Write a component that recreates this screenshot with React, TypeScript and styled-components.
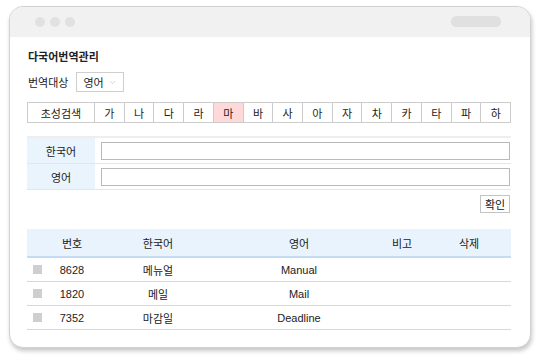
import React from "react";
import styled, { createGlobalStyle } from "styled-components";
import { ChevronDown } from "lucide-react";

const GlobalStyle = createGlobalStyle`
  body {
    margin: 0;
    background: #ffffff;
    font-family: "Liberation Sans", "Noto Sans CJK KR", sans-serif;
    font-size: 11px;
    color: #222;
  }
`;

type Row = { no: string; ko: string; en: string };

const rows: Row[] = [
  { no: "8628", ko: "메뉴얼", en: "Manual" },
  { no: "1820", ko: "메일", en: "Mail" },
  { no: "7352", ko: "마감일", en: "Deadline" },
];

const letters = ["가", "나", "다", "라", "마", "바", "사", "아", "자", "차", "카", "타", "파", "하"];

const Page = styled.div`
  width: 541px;
  height: 361px;
  box-sizing: border-box;
  padding: 6px 10px 13px 9px;
`;

const Window = styled.div`
  height: 100%;
  box-sizing: border-box;
  border: 1px solid #d2d2d2;
  border-radius: 14px;
  background: #fff;
  box-shadow: 1px 3px 4px rgba(0, 0, 0, 0.22);
  overflow: hidden;
  display: flex;
  flex-direction: column;
`;

const TitleBar = styled.div`
  height: 30px;
  background: #f1f1f1;
  display: flex;
  align-items: center;
  padding: 0 29px 0 25px;
  gap: 5px;
`;

const Dot = styled.span`
  width: 10px;
  height: 10px;
  border-radius: 50%;
  background: #e1e1e1;
`;

const Pill = styled.span`
  margin-left: auto;
  width: 50px;
  height: 11px;
  border-radius: 6px;
  background: #e0e0e0;
  margin-top: -2px;
`;

const Content = styled.div`
  padding: 0 19px 0 17px;
  display: flex;
  flex-direction: column;
`;

const Heading = styled.h1`
  margin: 11px 0 0 1px;
  font-family: "Noto Sans CJK KR", sans-serif;
  font-size: 11px;
  line-height: 16px;
  font-weight: 700;
  color: #222;
`;

const TargetRow = styled.div`
  margin-top: 8px;
  display: flex;
  align-items: center;
  gap: 8px;
  height: 20px;
`;

const Label = styled.span`
  font-family: "Noto Sans CJK KR", sans-serif;
  font-size: 11px;
  margin-left: 1px;
  white-space: nowrap;
`;

const SelectBox = styled.div`
  width: 48px;
  height: 20px;
  flex: 0 0 auto;
  box-sizing: border-box;
  border: 1px solid #cfcfcf;
  display: flex;
  align-items: center;
  padding: 0 3px 0 6px;
  gap: 4px;
  white-space: nowrap;
  font-family: "Noto Sans CJK KR", sans-serif;
  font-size: 11px;
  color: #222;
  svg {
    flex: 0 0 auto;
  }
`;

const ChosungBar = styled.div`
  margin-top: 10px;
  display: flex;
  height: 21px;
  box-sizing: border-box;
  border: 1px solid #cccccc;
`;

const ChosungCell = styled.div<{ $wide?: boolean; $active?: boolean }>`
  flex: ${(p) => (p.$wide ? "0 0 66px" : "1 1 0")};
  display: flex;
  align-items: center;
  justify-content: center;
  font-family: "Noto Sans CJK KR", sans-serif;
  font-size: 11px;
  color: #222;
  background: ${(p) => (p.$active ? "#ffd9d9" : "#fff")};
  & + & {
    border-left: 1px solid #cccccc;
  }
`;

const FormTable = styled.div`
  margin-top: 13px;
  border-top: 2px solid #eeeeee;
`;

const FormRow = styled.div`
  display: flex;
  height: 25px;
  border-bottom: 1px solid #e6e6e6;
`;

const FormLabel = styled.div`
  width: 68px;
  background: #eaf4fd;
  display: flex;
  align-items: center;
  justify-content: center;
  font-family: "Noto Sans CJK KR", sans-serif;
  font-size: 11px;
  color: #222;
`;

const FormField = styled.div`
  flex: 1;
  display: flex;
  align-items: center;
  padding: 0 1px 0 6px;
`;

const TextInput = styled.input`
  width: 100%;
  height: 18px;
  box-sizing: border-box;
  border: 1px solid #b9b9b9;
  padding: 0 4px;
  outline: none;
  background: #fff;
`;

const Actions = styled.div`
  margin-top: 5px;
  display: flex;
  justify-content: flex-end;
  padding-right: 1px;
`;

const Button = styled.button`
  width: 30px;
  height: 18px;
  box-sizing: border-box;
  border: 1px solid #c4c4c4;
  background: #fff;
  padding: 0;
  font-family: "Noto Sans CJK KR", sans-serif;
  font-size: 11px;
  font-weight: 400;
  color: #111;
`;

const Grid = styled.div`
  margin-top: 16px;
`;

const cols = "22px 46px 126px 156px 50px 1fr";

const GridHead = styled.div`
  display: grid;
  grid-template-columns: ${cols};
  height: 27px;
  background: #e8f3fd;
  border-bottom: 2px solid #c3dcf2;
  align-items: center;
`;

const GridRow = styled.div`
  display: grid;
  grid-template-columns: ${cols};
  height: 23px;
  border-bottom: 1px solid #c6dcf0;
  align-items: center;
`;

const Cell = styled.div<{ $kr?: boolean }>`
  text-align: center;
  font-family: ${(p) => (p.$kr ? '"Noto Sans CJK KR", sans-serif' : '"Liberation Sans", "Noto Sans CJK KR", sans-serif')};
  font-size: 11px;
  color: #222;
`;

const Check = styled.span`
  display: block;
  width: 9px;
  height: 9px;
  background: #cfcfcf;
  margin-left: 6px;
`;

export default function App() {
  return (
    <Page>
      <GlobalStyle />
      <Window>
        <TitleBar>
          <Dot />
          <Dot />
          <Dot />
          <Pill />
        </TitleBar>
        <Content>
          <Heading>다국어번역관리</Heading>
          <TargetRow>
            <Label>번역대상</Label>
            <SelectBox>
              <span>영어</span>
              <ChevronDown size={9} color="#b5b5b5" strokeWidth={1.5} />
            </SelectBox>
          </TargetRow>
          <ChosungBar>
            <ChosungCell $wide>초성검색</ChosungCell>
            {letters.map((l) => (
              <ChosungCell key={l} $active={l === "마"}>
                {l}
              </ChosungCell>
            ))}
          </ChosungBar>
          <FormTable>
            <FormRow>
              <FormLabel>한국어</FormLabel>
              <FormField>
                <TextInput type="text" />
              </FormField>
            </FormRow>
            <FormRow>
              <FormLabel>영어</FormLabel>
              <FormField>
                <TextInput type="text" />
              </FormField>
            </FormRow>
          </FormTable>
          <Actions>
            <Button>확인</Button>
          </Actions>
          <Grid>
            <GridHead>
              <span />
              <Cell $kr>번호</Cell>
              <Cell $kr>한국어</Cell>
              <Cell $kr>영어</Cell>
              <Cell $kr>비고</Cell>
              <Cell $kr>삭제</Cell>
            </GridHead>
            {rows.map((r) => (
              <GridRow key={r.no}>
                <Check />
                <Cell>{r.no}</Cell>
                <Cell $kr>{r.ko}</Cell>
                <Cell>{r.en}</Cell>
                <Cell />
                <Cell />
              </GridRow>
            ))}
          </Grid>
        </Content>
      </Window>
    </Page>
  );
}
